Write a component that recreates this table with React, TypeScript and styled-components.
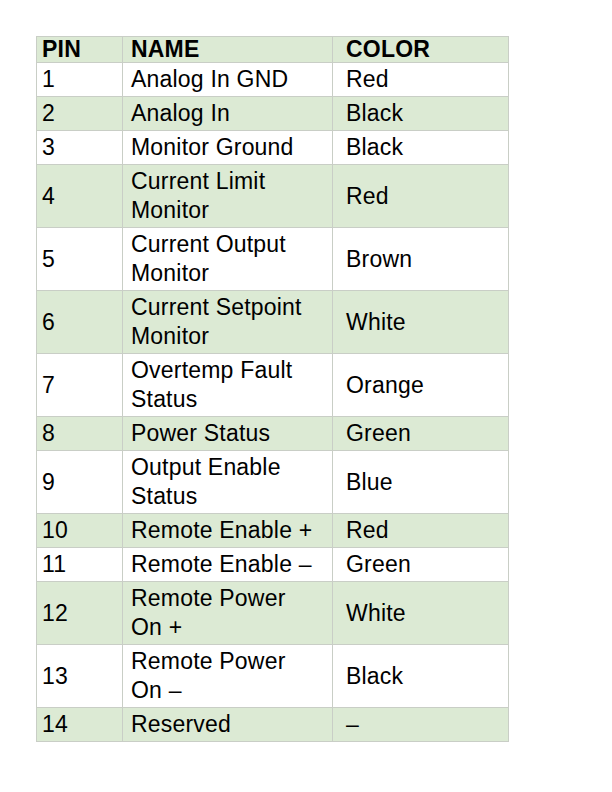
import styled, { createGlobalStyle } from "styled-components";

const pins = [
    { pin: "1", name: ["Analog In GND"], color: "Red" },
    { pin: "2", name: ["Analog In"], color: "Black" },
    { pin: "3", name: ["Monitor Ground"], color: "Black" },
    { pin: "4", name: ["Current Limit", "Monitor"], color: "Red" },
    { pin: "5", name: ["Current Output", "Monitor"], color: "Brown" },
    { pin: "6", name: ["Current Setpoint", "Monitor"], color: "White" },
    { pin: "7", name: ["Overtemp Fault", "Status"], color: "Orange" },
    { pin: "8", name: ["Power Status"], color: "Green" },
    { pin: "9", name: ["Output Enable", "Status"], color: "Blue" },
    { pin: "10", name: ["Remote Enable +"], color: "Red" },
    { pin: "11", name: ["Remote Enable \u2013"], color: "Green" },
    { pin: "12", name: ["Remote Power", "On +"], color: "White" },
    { pin: "13", name: ["Remote Power", "On \u2013"], color: "Black" },
    { pin: "14", name: ["Reserved"], color: "\u2013" },
];

const App = () => {
    return (
        <>
            <GlobalStyle />
            <StyledPage>
                <StyledTable>
                    <colgroup>
                        <col style={{ width: 86 }} />
                        <col style={{ width: 210 }} />
                        <col style={{ width: 176 }} />
                    </colgroup>
                    <thead>
                        <StyledRow $shaded>
                            <StyledHead $pad={5}>PIN</StyledHead>
                            <StyledHead $pad={8}>NAME</StyledHead>
                            <StyledHead $pad={13}>COLOR</StyledHead>
                        </StyledRow>
                    </thead>
                    <tbody>
                        {pins.map((row, index) => (
                            <StyledRow $shaded={index % 2 === 1} key={row.pin}>
                                <StyledCell $pad={5}>{row.pin}</StyledCell>
                                <StyledCell $pad={8}>
                                    {row.name.map((line) => (
                                        <StyledLine key={line}>{line}</StyledLine>
                                    ))}
                                </StyledCell>
                                <StyledCell $pad={13}>{row.color}</StyledCell>
                            </StyledRow>
                        ))}
                    </tbody>
                </StyledTable>
            </StyledPage>
        </>
    );
};

const GlobalStyle = createGlobalStyle`
    html, body {
        margin: 0;
        padding: 0;
        background: #ffffff;
    }
`;

const StyledPage = styled.div`
    width: 612px;
    height: 792px;
    padding: 36px 0 0 36px;
    box-sizing: border-box;
    font-family: "Liberation Sans", Arial, sans-serif;
    color: #000000;
`;

const StyledTable = styled.table`
    width: 472px;
    border-collapse: collapse;
    table-layout: fixed;
    font-size: 23px;
    letter-spacing: 0.2px;
`;

const StyledRow = styled.tr<{ $shaded?: boolean }>`
    background-color: ${(p) => (p.$shaded ? "#dcead4" : "#ffffff")};
`;

const StyledHead = styled.th<{ $pad: number }>`
    height: 25px;
    padding: 0 4px 0 ${(p) => p.$pad}px;
    border: 1px solid #c9cec6;
    text-align: left;
    font-weight: bold;
    line-height: 25px;
    vertical-align: middle;
`;

const StyledCell = styled.td<{ $pad: number }>`
    padding: 2px 4px 2px ${(p) => p.$pad}px;
    border: 1px solid #c9cec6;
    line-height: 29px;
    vertical-align: middle;
    white-space: nowrap;
`;

const StyledLine = styled.div`
    display: block;
`;

export default App;
